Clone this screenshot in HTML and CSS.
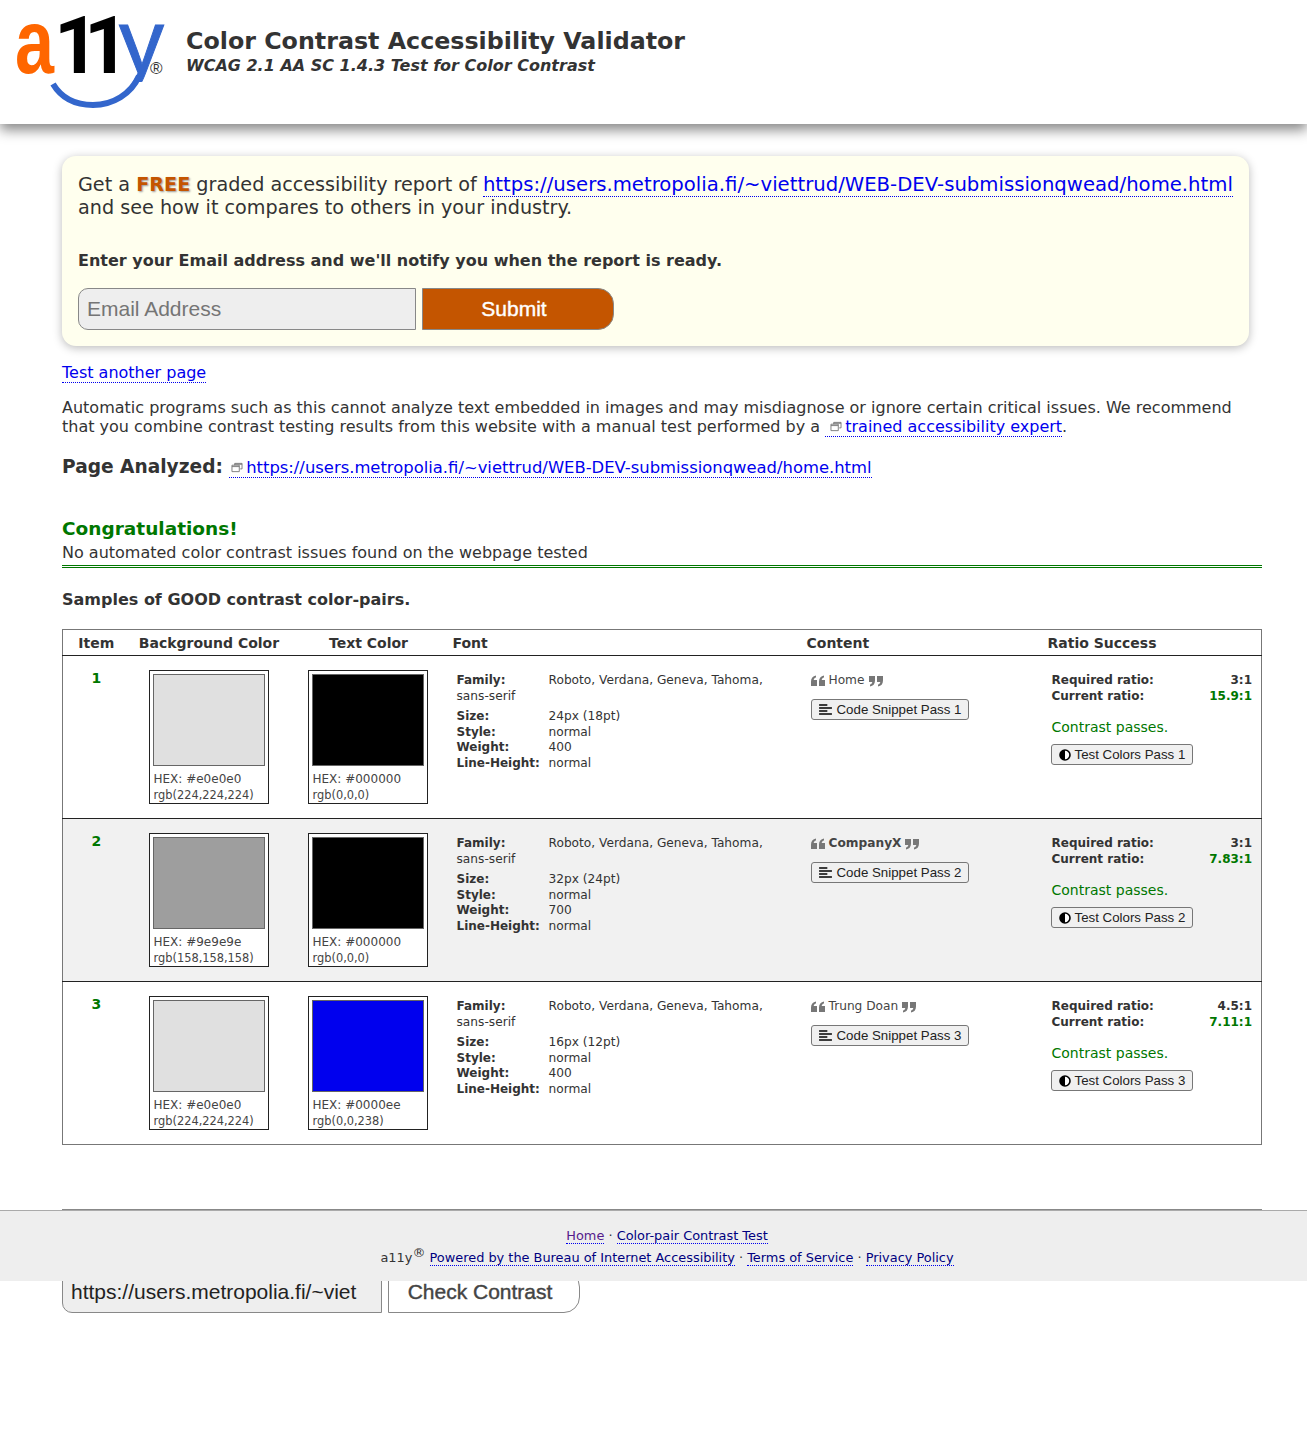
FILE: index.html
```html
<!DOCTYPE html>
<html lang="en">
    <head>
        <meta charset="UTF-8" />
        <meta name="viewport" content="width=device-width, initial-scale=1.0" />
        <title>Color Contrast Accessibility Validator</title>
        <link rel="stylesheet" href="styles.css">
    </head>
    <body>
        <svg class="icon-defs" width="0" height="0" aria-hidden="true">
            <symbol id="i-popup" viewBox="0 0 12 12">
                <path d="M3.5 1.5h8v6h-2M3.5 1.500v2M3.500 2.500h8" fill="none" stroke="#777" />
                <path d="M.5 3.500h8v7h-8zM.5 5h8" fill="none" stroke="#777" />
            </symbol>
            <symbol id="i-quote-left" viewBox="0 0 14 12">
                <path d="M0 11V6.500C0 3 1.800 1 5 .5v2C3.500 2.800 2.800 3.800 2.700 5H6v6zM8 11V6.500C8 3 9.800 1 13 .5v2c-1.500.3-2.200 1.300-2.300 2.500H14v6z" fill="#777" />
            </symbol>
            <symbol id="i-quote-right" viewBox="0 0 14 12">
                <path d="M6 1v4.500C6 9 4.200 11 1 11.500v-2C2.500 9.200 3.200 8.200 3.300 7H0V1zM14 1v4.500C14 9 12.200 11 9 11.500v-2c1.500-.3 2.200-1.300 2.300-2.500H8V1z" fill="#777" />
            </symbol>
            <symbol id="i-lines" viewBox="0 0 14 12">
                <path d="M0 1h9M0 4.300h14M0 7.600h9M0 11h14" fill="none" stroke="#000" stroke-width="1.600" />
            </symbol>
            <symbol id="i-adjust" viewBox="0 0 12 12">
                <circle cx="6" cy="6" r="5" fill="#fff" stroke="#000" stroke-width="1.600" />
                <path d="M6 1a5 5 0 0 0 0 10z" fill="#000" />
            </symbol>
        </svg>

        <header class="site-header">
            <svg class="logo" width="160" height="100" viewBox="0 0 160 100" role="img" aria-label="a11y">
                <clipPath id="logo-y-clip"><rect x="95" y="0" width="60" height="74" /></clipPath>
                <text class="logo-a" x="0" y="65" textLength="39" lengthAdjust="spacingAndGlyphs">a</text>
                <text class="logo-one" x="39" y="65">1</text>
                <text class="logo-one" x="69" y="65">1</text>
                <text class="logo-y" x="104" y="65" textLength="45" lengthAdjust="spacingAndGlyphs" clip-path="url(#logo-y-clip)">y</text>
                <path d="M38 76c9 15 24 21 40 21 20 0 38-11 46-29" fill="none" stroke="#3366cc" stroke-width="6" />
                <text class="logo-reg" x="135" y="66">®</text>
            </svg>
            <div class="site-title">
                <h1>Color Contrast Accessibility Validator</h1>
                <p>WCAG 2.1 AA SC 1.4.3 Test for Color Contrast</p>
            </div>
        </header>

        <main class="content">
            <section class="notice">
                <p class="notice-lead">Get a <strong>FREE</strong> graded accessibility report of <a href="#">https://users.metropolia.fi/~viettrud/WEB-DEV-submissionqwead/home.html</a> and see how it compares to others in your industry.</p>
                <p class="notice-email">Enter your Email address and we'll notify you when the report is ready.</p>
                <form class="field-row">
                    <input class="field field-email" type="text" placeholder="Email Address" />
                    <button class="action action-submit" type="button">Submit</button>
                </form>
            </section>

            <p class="another"><a href="#">Test another page</a></p>
            <p class="disclaimer">Automatic programs such as this cannot analyze text embedded in images and may misdiagnose or ignore certain critical issues. We recommend that you combine contrast testing results from this website with a manual test performed by a <a href="#"><svg class="i-popup"><use href="#i-popup" /></svg>trained accessibility expert</a>.</p>
            <p class="analyzed"><b>Page Analyzed:</b> <a href="#"><svg class="i-popup"><use href="#i-popup" /></svg>https://users.metropolia.fi/~viettrud/WEB-DEV-submissionqwead/home.html</a></p>

            <div class="result">
                <h2>Congratulations!</h2>
                <p>No automated color contrast issues found on the webpage tested</p>
            </div>

            <h3 class="samples">Samples of GOOD contrast color-pairs.</h3>

            <table class="pairs">
                <thead>
                    <tr>
                        <th class="col-item">Item</th>
                        <th class="col-bg">Background Color</th>
                        <th class="col-text">Text Color</th>
                        <th class="col-font">Font</th>
                        <th class="col-content">Content</th>
                        <th class="col-ratio">Ratio Success</th>
                    </tr>
                </thead>
                <tbody>
                    <tr>
                        <td class="num">1</td>
                        <td><div class="swatch"><div class="chip" style="background:#e0e0e0"></div><span>HEX: #e0e0e0</span><span class="rgb">rgb(224,224,224)</span></div></td>
                        <td><div class="swatch"><div class="chip" style="background:#000000"></div><span>HEX: #000000</span><span class="rgb">rgb(0,0,0)</span></div></td>
                        <td class="font-cell">
                            <p class="family"><b>Family:</b>Roboto, Verdana, Geneva, Tahoma, sans-serif</p>
                            <dl><dt>Size:</dt><dd>24px (18pt)</dd><dt>Style:</dt><dd>normal</dd><dt>Weight:</dt><dd>400</dd><dt>Line-Height:</dt><dd>normal</dd></dl>
                        </td>
                        <td class="content-cell">
                            <p class="quote"><svg class="i-quote"><use href="#i-quote-left" /></svg>Home<svg class="i-quote"><use href="#i-quote-right" /></svg></p>
                            <button class="mini" type="button"><svg class="i-lines"><use href="#i-lines" /></svg>Code Snippet Pass 1</button>
                        </td>
                        <td class="ratio-cell">
                            <p class="ratio"><b>Required ratio:</b><b>3:1</b></p>
                            <p class="ratio"><b>Current ratio:</b><b class="good">15.9:1</b></p>
                            <p class="passes">Contrast passes.</p>
                            <button class="mini" type="button"><svg class="i-adjust"><use href="#i-adjust" /></svg>Test Colors Pass 1</button>
                        </td>
                    </tr>
                    <tr class="alt">
                        <td class="num">2</td>
                        <td><div class="swatch"><div class="chip" style="background:#9e9e9e"></div><span>HEX: #9e9e9e</span><span class="rgb">rgb(158,158,158)</span></div></td>
                        <td><div class="swatch"><div class="chip" style="background:#000000"></div><span>HEX: #000000</span><span class="rgb">rgb(0,0,0)</span></div></td>
                        <td class="font-cell">
                            <p class="family"><b>Family:</b>Roboto, Verdana, Geneva, Tahoma, sans-serif</p>
                            <dl><dt>Size:</dt><dd>32px (24pt)</dd><dt>Style:</dt><dd>normal</dd><dt>Weight:</dt><dd>700</dd><dt>Line-Height:</dt><dd>normal</dd></dl>
                        </td>
                        <td class="content-cell">
                            <p class="quote"><svg class="i-quote"><use href="#i-quote-left" /></svg><b>CompanyX</b><svg class="i-quote"><use href="#i-quote-right" /></svg></p>
                            <button class="mini" type="button"><svg class="i-lines"><use href="#i-lines" /></svg>Code Snippet Pass 2</button>
                        </td>
                        <td class="ratio-cell">
                            <p class="ratio"><b>Required ratio:</b><b>3:1</b></p>
                            <p class="ratio"><b>Current ratio:</b><b class="good">7.83:1</b></p>
                            <p class="passes">Contrast passes.</p>
                            <button class="mini" type="button"><svg class="i-adjust"><use href="#i-adjust" /></svg>Test Colors Pass 2</button>
                        </td>
                    </tr>
                    <tr>
                        <td class="num">3</td>
                        <td><div class="swatch"><div class="chip" style="background:#e0e0e0"></div><span>HEX: #e0e0e0</span><span class="rgb">rgb(224,224,224)</span></div></td>
                        <td><div class="swatch"><div class="chip" style="background:#0000ee"></div><span>HEX: #0000ee</span><span class="rgb">rgb(0,0,238)</span></div></td>
                        <td class="font-cell">
                            <p class="family"><b>Family:</b>Roboto, Verdana, Geneva, Tahoma, sans-serif</p>
                            <dl><dt>Size:</dt><dd>16px (12pt)</dd><dt>Style:</dt><dd>normal</dd><dt>Weight:</dt><dd>400</dd><dt>Line-Height:</dt><dd>normal</dd></dl>
                        </td>
                        <td class="content-cell">
                            <p class="quote"><svg class="i-quote"><use href="#i-quote-left" /></svg>Trung Doan<svg class="i-quote"><use href="#i-quote-right" /></svg></p>
                            <button class="mini" type="button"><svg class="i-lines"><use href="#i-lines" /></svg>Code Snippet Pass 3</button>
                        </td>
                        <td class="ratio-cell">
                            <p class="ratio"><b>Required ratio:</b><b>4.5:1</b></p>
                            <p class="ratio"><b>Current ratio:</b><b class="good">7.11:1</b></p>
                            <p class="passes">Contrast passes.</p>
                            <button class="mini" type="button"><svg class="i-adjust"><use href="#i-adjust" /></svg>Test Colors Pass 3</button>
                        </td>
                    </tr>
                </tbody>
            </table>

            <hr class="end-rule" />
        </main>

        <footer class="site-footer">
            <p><a class="seen" href="#">Home</a> · <a href="#">Color-pair Contrast Test</a></p>
            <p>a11y<sup>®</sup> <a href="#">Powered by the Bureau of Internet Accessibility</a> · <a href="#">Terms of Service</a> · <a href="#">Privacy Policy</a></p>
        </footer>

        <form class="field-row under-footer">
            <input class="field field-url" type="text" value="https://users.metropolia.fi/~viet" />
            <button class="action action-check" type="button">Check Contrast</button>
        </form>
    </body>
</html>
```

FILE: styles.css
```css
* {
    box-sizing: border-box;
}

body {
    margin: 0;
    font-family: "DejaVu Sans", Verdana, sans-serif;
    color: #333;
    background-color: #fff;
}

p {
    margin: 0;
}

a {
    color: #0000ee;
    text-decoration: none;
    border-bottom: 1px dotted #0000ee;
}

.icon-defs {
    position: absolute;
}

/* header */
.site-header {
    display: flex;
    height: 124px;
    padding: 8px 0 0 15px;
    background-color: #fff;
    box-shadow: 0 6px 12px #888;
}

.logo {
    flex: none;
    overflow: visible;
}

.logo text {
    font-family: "Liberation Sans", Arial, sans-serif;
    font-weight: bold;
}

.logo-a {
    font-size: 90px;
    fill: #ff6600;
}

.logo .logo-one {
    font-family: Roboto, Arial, sans-serif;
    font-size: 79px;
    fill: #000;
}

.logo .logo-y {
    font-size: 90px;
    font-weight: normal;
    fill: #3366cc;
    stroke: #3366cc;
    stroke-width: 1px;
}

.logo .logo-reg {
    font-size: 17px;
    font-weight: normal;
    fill: #333;
}

.site-title {
    margin: 19px 0 0 11px;
}

.site-title h1 {
    margin: 0;
    font-size: 23.750px;
    line-height: 29px;
    font-weight: bold;
}

.site-title p {
    font-size: 16px;
    line-height: 19px;
    font-weight: bold;
    font-style: italic;
}

/* main column */
.content {
    width: 1200px;
    margin: 32px 0 0 62px;
}

.notice {
    width: 1187px;
    height: 190px;
    padding: 17px 10px 16px 16px;
    background-color: #ffffee;
    border-radius: 14px;
    box-shadow: 0 2px 10px #bbb;
}

.notice-lead {
    font-size: 19.200px;
    line-height: 23px;
}

.notice-lead a {
    font-size: 19.660px;
}

.notice-lead strong {
    color: #c45500;
    text-shadow: 1px 1px 2px #999;
}

.notice-email {
    margin-top: 30px;
    font-size: 16px;
    line-height: 23px;
    font-weight: bold;
}

.field-row {
    display: flex;
    gap: 6px;
}

.notice .field-row {
    margin-top: 16px;
}

.field {
    height: 42px;
    padding: 0 8px;
    font-family: "Liberation Sans", Arial, sans-serif;
    font-size: 21px;
    color: #222;
    background-color: #eee;
    border: 1px solid #888;
    border-radius: 10px 0 0 10px;
}

.field::placeholder {
    color: #757575;
}

.field-email {
    width: 338px;
}

.field-url {
    width: 320px;
}

.action {
    width: 192px;
    height: 42px;
    padding: 0 14px 0 6px;
    font-family: "Liberation Sans", Arial, sans-serif;
    font-size: 21px;
    border: 1px solid #888;
    border-radius: 0 16px 16px 0;
}

.action-submit {
    font-weight: normal;
    color: #fff;
    background-color: #c45500;
    -webkit-text-stroke: .4px #fff;
}

.action-check {
    color: #444;
    background-color: #fff;
    -webkit-text-stroke: .4px #444;
}

.another {
    margin-top: 17px;
    font-size: 16px;
    line-height: 20px;
}

.disclaimer {
    margin-top: 15px;
    font-size: 16px;
    line-height: 19px;
}

.i-popup {
    width: 12px;
    height: 11px;
    margin: 0 3px 0 2px;
}

.disclaimer .i-popup {
    margin-left: 5px;
}

.analyzed {
    margin-top: 19px;
    font-size: 16.400px;
    line-height: 24px;
}

.analyzed b {
    font-size: 18.600px;
    margin-right: 1px;
}

.result {
    margin-top: 36px;
    border-bottom: 3px double #007700;
}

.result h2 {
    margin: 0;
    font-size: 18.500px;
    line-height: 25px;
    color: #007700;
}

.result p {
    font-size: 16px;
    line-height: 24px;
}

.samples {
    margin: 21px 0 18px;
    font-size: 16px;
    line-height: 22px;
}

/* samples table */
.pairs {
    width: 1200px;
    border: 1px solid #777;
    border-collapse: collapse;
    table-layout: fixed;
    font-size: 12.200px;
}

.pairs th {
    height: 26px;
    padding: 0;
    font-size: 14px;
    border-bottom: 1px solid #222;
}

.col-item { width: 67px; }
.col-bg { width: 159px; }
.col-text { width: 160px; }
.col-font { width: 354px; padding-left: 4px !important; text-align: left; }
.col-content { width: 241px; padding-left: 4px !important; text-align: left; }
.col-ratio { text-align: left; padding-left: 4px !important; }

.pairs td {
    height: 163px;
    padding: 14px 0;
    vertical-align: top;
    border-bottom: 1px solid #222;
}

.pairs tr:last-child td {
    border-bottom: 0;
}

.alt td {
    background-color: #f1f1f1;
}

.pairs .num {
    padding-top: 14px;
    font-size: 14px;
    font-weight: bold;
    text-align: center;
    color: #007700;
}

.swatch {
    width: 120px;
    height: 134px;
    margin-left: 19px;
    padding: 3px;
    background-color: #fff;
    border: 1px solid #222;
}

.chip {
    height: 92px;
    margin-bottom: 5px;
    border: 1px solid #666;
}

.swatch span {
    display: block;
    padding-left: 1px;
    font-size: 12px;
    line-height: 16px;
    color: #444;
}

.swatch .rgb {
    font-size: 11.400px;
}

.font-cell,
.content-cell,
.ratio-cell {
    line-height: 15.500px;
}

.font-cell b,
.font-cell dt,
.ratio b {
    font-size: 12px;
}

.pairs .font-cell {
    padding: 17px 30px 0 8px;
}

.family b {
    display: inline-block;
    width: 92px;
}

.font-cell dl {
    display: grid;
    grid-template-columns: 92px 1fr;
    margin: 5px 0 0;
}

.font-cell dt {
    font-weight: bold;
}

.font-cell dd {
    margin: 0;
}

.pairs .content-cell {
    padding: 17px 0 0 8px;
}

.quote {
    display: flex;
    align-items: center;
    gap: 4px;
    height: 16px;
    color: #444;
}

.i-quote {
    width: 14px;
    height: 12px;
}

.mini {
    display: inline-flex;
    align-items: center;
    gap: 5px;
    height: 21px;
    padding: 0 7px;
    font-family: "Liberation Sans", Arial, sans-serif;
    font-size: 13.300px;
    color: #222;
    background-color: #f0f0f0;
    border: 1px solid #777;
    border-radius: 3px;
}

.content-cell .mini {
    margin-top: 10px;
}

.i-lines {
    width: 13px;
    height: 11px;
}

.i-adjust {
    width: 12px;
    height: 12px;
}

.pairs .ratio-cell {
    padding: 16px 9px 0 8px;
}

.ratio {
    display: flex;
    justify-content: space-between;
    line-height: 16px;
}

.good {
    color: #007700;
}

.passes {
    margin-top: 14px;
    font-size: 14px;
    line-height: 18px;
    color: #007700;
}

.ratio-cell .mini {
    gap: 4px;
    margin: 8px 0 0 -1px;
}

.end-rule {
    margin: 64px 0 -1px;
    height: 2px;
    background-color: #888;
    border: 0;
}

/* footer sits on top of the repeated form */
.site-footer {
    position: relative;
    z-index: 1;
    height: 71px;
    padding: 14px 0 0 27px;
    font-size: 12.900px;
    line-height: 22px;
    text-align: center;
    background-color: #eee;
    border-top: 1px solid #aaa;
}

.site-footer a {
    color: #000080;
    border-bottom-color: #0000ee;
}

.site-footer a.seen {
    color: #551a8b;
}

.site-footer sup {
    font-size: 13px;
    line-height: 0;
}

.under-footer {
    margin: -10px 0 124px 62px;
}
```
